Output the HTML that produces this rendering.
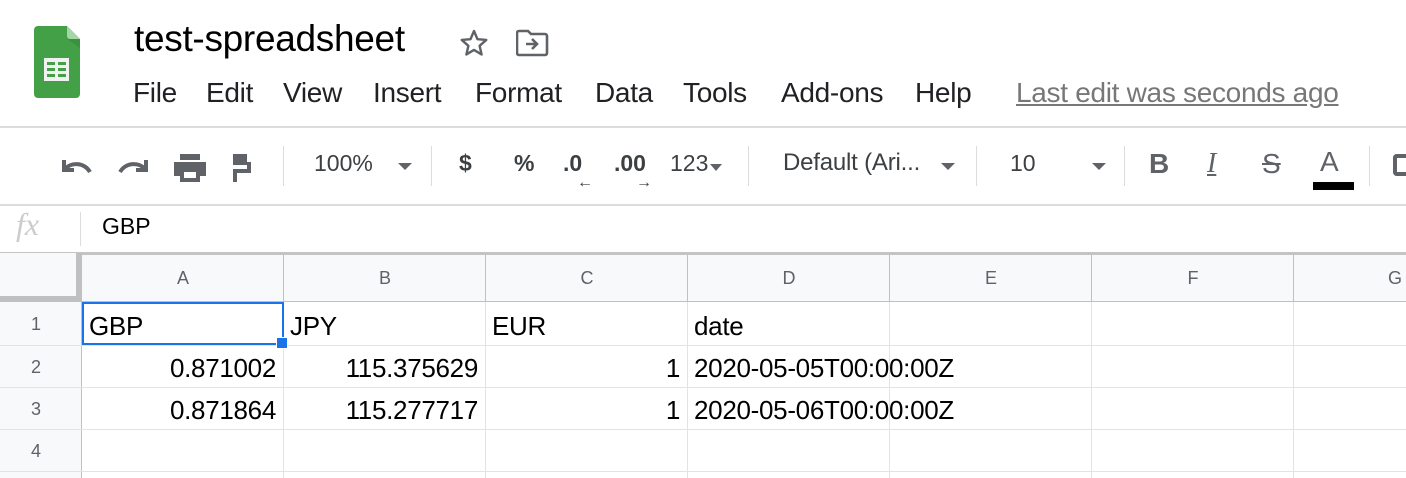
<!DOCTYPE html>
<html><head><meta charset="utf-8"><style>
*{margin:0;padding:0;box-sizing:border-box}
body{width:1406px;height:478px;overflow:hidden;background:#fff;font-family:"Liberation Sans",Arial,sans-serif;position:relative;color:#000}
.a{position:absolute;white-space:nowrap}
.m{font-size:28px;color:#202124;top:77px;letter-spacing:-0.3px}
.t{font-size:23px;color:#3c4043;top:150px}
.sep{position:absolute;top:146px;width:1px;height:40px;background:#dadce0}
.hl{position:absolute;height:1px;background:#e2e3e3;left:0;width:1406px}
.vl{position:absolute;width:1px;background:#e2e3e3}
.ch{font-size:18px;color:#5f6368;top:268px;text-align:center;width:202px}
.rh{font-size:18px;color:#5f6368;left:0;width:72px;text-align:center}
.c{font-size:26px;color:#000;letter-spacing:-0.3px}
.r{text-align:right;width:194px}
</style></head><body>
<svg class="a" style="left:34px;top:26px" width="46" height="72" viewBox="0 0 46 72">
<path d="M4 0H33L46 13V68a4 4 0 0 1-4 4H4a4 4 0 0 1-4-4V4a4 4 0 0 1 4-4z" fill="#43a047"/>
<path d="M33 0L46 13H36a3 3 0 0 1-3-3z" fill="#a5d6a7"/>
<path d="M33 13H46V22z" fill="#2e7d32" opacity=".4"/>
<rect x="10" y="32" width="25" height="23" fill="#f1f1f1"/>
<g fill="#43a047"><rect x="13" y="36" width="8" height="3"/><rect x="24" y="36" width="8" height="3"/><rect x="13" y="42" width="8" height="3"/><rect x="24" y="42" width="8" height="3"/><rect x="13" y="48" width="8" height="3"/><rect x="24" y="48" width="8" height="3"/></g>
</svg>
<div class="a" style="left:134px;top:18px;font-size:37px;color:#000;letter-spacing:-0.3px">test-spreadsheet</div>
<svg class="a" style="left:458px;top:27px" width="32" height="32" viewBox="0 0 24 24"><path d="M12 3l2.6 6.1 6.6.6-5 4.4 1.5 6.5L12 17.2 6.3 20.6l1.5-6.5-5-4.4 6.6-.6z" fill="none" stroke="#5f6368" stroke-width="1.8" stroke-linejoin="round"/></svg>
<svg class="a" style="left:516px;top:29px" width="34" height="28" viewBox="0 0 34 28"><path d="M3 2h9l3 3h14a2 2 0 0 1 2 2v17a2 2 0 0 1-2 2H3a2 2 0 0 1-2-2V4a2 2 0 0 1 2-2z" fill="none" stroke="#5f6368" stroke-width="2.6"/><path d="M10 15h10M16 10l5 5-5 5" fill="none" stroke="#5f6368" stroke-width="2.6"/></svg>
<div class="a m" style="left:133px">File</div>
<div class="a m" style="left:206px">Edit</div>
<div class="a m" style="left:283px">View</div>
<div class="a m" style="left:373px">Insert</div>
<div class="a m" style="left:475px">Format</div>
<div class="a m" style="left:595px">Data</div>
<div class="a m" style="left:683px">Tools</div>
<div class="a m" style="left:781px">Add-ons</div>
<div class="a m" style="left:915px">Help</div>
<div class="a m" style="left:1016px;color:#777;text-decoration:underline">Last edit was seconds ago</div>
<div class="hl" style="top:126px;height:2px;background:#dadce0"></div>
<svg class="a" style="left:60px;top:154px" width="216" height="28" viewBox="0 0 216 28">
<path d="M4 6v10h10" fill="none" stroke="#5f6368" stroke-width="4"/><path d="M5 15c6-7 19-7 25 3" fill="none" stroke="#5f6368" stroke-width="4"/>
<path d="M86 6v10H76" fill="none" stroke="#5f6368" stroke-width="4"/><path d="M85 15c-6-7-19-7-25 3" fill="none" stroke="#5f6368" stroke-width="4"/>
<path d="M120 0h20v6h-20z M114 8h32v14h-6v6h-20v-6h-6z" fill="#5f6368"/><rect x="124" y="18" width="12" height="6" fill="#fff"/>
<path d="M173 0h14v8h4v11h-14v9h-4v-13h14v-4h-14z" fill="#5f6368"/>
</svg>
<div class="sep" style="left:283px"></div>
<div class="a t" style="left:314px">100%</div>
<div class="a" style="left:398px;top:163px;border:7px solid transparent;border-top:7px solid #5f6368"></div>
<div class="sep" style="left:431px"></div>
<div class="a t" style="left:459px;font-weight:bold">$</div>
<div class="a t" style="left:514px;font-weight:bold">%</div>
<div class="a t" style="left:563px;font-weight:bold">.0</div>
<div class="a" style="left:577px;top:174px;font-size:16px;color:#3c4043">&#x2190;</div>
<div class="a t" style="left:614px;font-weight:bold">.00</div>
<div class="a" style="left:636px;top:174px;font-size:16px;color:#3c4043">&#x2192;</div>
<div class="a t" style="left:670px">123</div>
<div class="a" style="left:710px;top:164px;border:6px solid transparent;border-top:7px solid #5f6368"></div>
<div class="sep" style="left:748px"></div>
<div class="a t" style="left:783px;font-size:24px;top:149px;letter-spacing:-0.2px">Default (Ari...</div>
<div class="a" style="left:941px;top:163px;border:7px solid transparent;border-top:7px solid #5f6368"></div>
<div class="sep" style="left:976px"></div>
<div class="a t" style="left:1010px">10</div>
<div class="a" style="left:1092px;top:163px;border:7px solid transparent;border-top:7px solid #5f6368"></div>
<div class="sep" style="left:1124px"></div>
<div class="a" style="left:1149px;top:148px;font-size:28px;font-weight:bold;color:#5f6368">B</div>
<div class="a" style="left:1207px;top:148px;font-size:28px;font-style:italic;color:#5f6368;font-family:'Liberation Serif',serif;text-decoration:underline">I</div>
<div class="a" style="left:1262px;top:148px;font-size:28px;color:#5f6368;text-decoration:line-through">S</div>
<div class="a" style="left:1320px;top:146px;font-size:28px;color:#5f6368">A</div>
<div class="a" style="left:1313px;top:182px;width:41px;height:8px;background:#000"></div>
<div class="sep" style="left:1369px"></div>
<div class="a" style="left:1393px;top:154px;width:13px;height:22px;border:4px solid #5f6368;border-right:none;border-radius:4px 0 0 4px"></div>
<div class="hl" style="top:204px;height:2px;background:#dadce0"></div>
<div class="a" style="left:16px;top:206px;font-size:32px;font-style:italic;color:#ccc;font-family:'Liberation Serif',serif">fx</div>
<div class="a" style="left:80px;top:212px;width:1px;height:34px;background:#dadce0"></div>
<div class="a" style="left:102px;top:213px;font-size:23px">GBP</div>
<div class="a" style="left:0;top:253px;width:1406px;height:49px;background:#f8f9fa"></div>
<div class="a" style="left:0;top:302px;width:81px;height:176px;background:#f8f9fa"></div>
<div class="hl" style="top:252px;height:3px;background:#c4c4c4"></div>
<div class="a" style="left:0;top:253px;width:81px;height:48px;border-right:5px solid #c0c0c0;border-bottom:5px solid #c0c0c0;background:#f8f9fa"></div>
<div class="vl" style="left:81px;top:253px;height:225px;background:#c0c0c0"></div>
<div class="hl" style="top:301px;background:#c0c0c0"></div>
<div class="hl" style="top:345px"></div><div class="hl" style="top:387px"></div><div class="hl" style="top:429px"></div><div class="hl" style="top:471px"></div>
<div class="vl" style="left:283px;top:255px;height:46px;background:#c0c0c0"></div><div class="vl" style="left:283px;top:302px;height:176px"></div>
<div class="vl" style="left:485px;top:255px;height:46px;background:#c0c0c0"></div><div class="vl" style="left:485px;top:302px;height:176px"></div>
<div class="vl" style="left:687px;top:255px;height:46px;background:#c0c0c0"></div><div class="vl" style="left:687px;top:302px;height:176px"></div>
<div class="vl" style="left:889px;top:255px;height:46px;background:#c0c0c0"></div><div class="vl" style="left:889px;top:302px;height:176px"></div>
<div class="vl" style="left:1091px;top:255px;height:46px;background:#c0c0c0"></div><div class="vl" style="left:1091px;top:302px;height:176px"></div>
<div class="vl" style="left:1293px;top:255px;height:46px;background:#c0c0c0"></div><div class="vl" style="left:1293px;top:302px;height:176px"></div>
<div class="a ch" style="left:82px">A</div><div class="a ch" style="left:284px">B</div><div class="a ch" style="left:486px">C</div><div class="a ch" style="left:688px">D</div><div class="a ch" style="left:890px">E</div><div class="a ch" style="left:1092px">F</div><div class="a ch" style="left:1294px">G</div>
<div class="a rh" style="top:314px">1</div><div class="a rh" style="top:357px">2</div><div class="a rh" style="top:399px">3</div><div class="a rh" style="top:441px">4</div>
<div class="a c" style="left:89px;top:311px">GBP</div>
<div class="a c" style="left:290px;top:311px">JPY</div>
<div class="a c" style="left:492px;top:311px">EUR</div>
<div class="a c" style="left:694px;top:311px">date</div>
<div class="a c r" style="left:82px;top:353px">0.871002</div>
<div class="a c r" style="left:284px;top:353px">115.375629</div>
<div class="a c r" style="left:486px;top:353px">1</div>
<div class="a c" style="left:694px;top:353px">2020-05-05T00:00:00Z</div>
<div class="a c r" style="left:82px;top:395px">0.871864</div>
<div class="a c r" style="left:284px;top:395px">115.277717</div>
<div class="a c r" style="left:486px;top:395px">1</div>
<div class="a c" style="left:694px;top:395px">2020-05-06T00:00:00Z</div>
<div class="a" style="left:82px;top:302px;width:202px;height:43px;border:2px solid #1a73e8"></div>
<div class="a" style="left:276px;top:337px;width:12px;height:12px;background:#1a73e8;border:1px solid #fff"></div>
</body></html>
